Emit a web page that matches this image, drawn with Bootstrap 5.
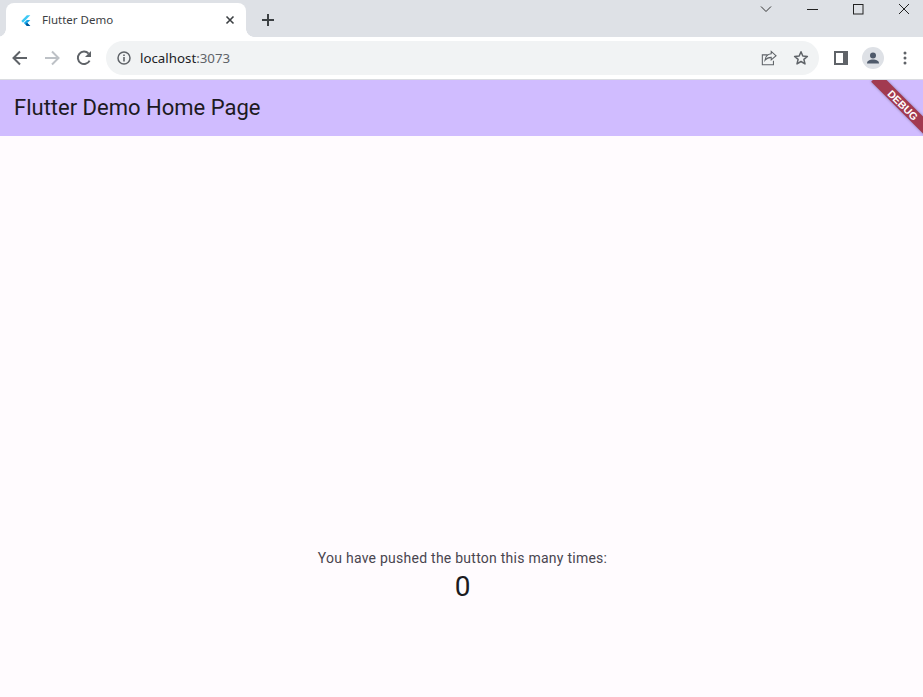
<!DOCTYPE html>
<html lang="en">
<head>
<meta charset="utf-8">
<title>Flutter Demo</title>
<link href="https://cdn.jsdelivr.net/npm/bootstrap@5.3.0/dist/css/bootstrap.min.css" rel="stylesheet">
<script src="https://cdn.jsdelivr.net/npm/bootstrap@5.3.0/dist/js/bootstrap.bundle.min.js"></script>
<style>
html,body{height:100%;overflow:hidden}
body{background:#fffbfe;font-family:Roboto,sans-serif;color:#1c1b1f}
.shell{height:697px}
.tabstrip{height:37px;background:#dee1e6;padding-left:6px;overflow:hidden}
.tabitem{width:240px;height:34px;margin-top:3px;background:#fff;border-radius:8px 8px 0 0;padding:0 11px 0 14px;font:11.5px "Noto Sans",sans-serif;color:#3c4043;position:relative}
.tabitem::before,.tabitem::after{content:"";position:absolute;bottom:0;width:8px;height:8px;background:radial-gradient(circle at 0 0,transparent 7.5px,#fff 8px)}
.tabitem::before{left:-8px}
.tabitem::after{right:-8px;background:radial-gradient(circle at 100% 0,transparent 7.5px,#fff 8px)}
.tabname{margin-left:10px;margin-top:-1px}
.plusbtn{margin-left:9px;margin-top:3px}
.winctl{margin-left:auto;margin-right:-4px;height:18px}
.winbtn{width:46px;height:18px}
.winbtn svg{display:block}
.toolbar{height:43px;background:#fff;border-bottom:1px solid #dadce0;padding:0 0 1px 4px}
.navbtn{width:32px;height:32px;flex:none}
.omnibox{width:713px;height:34px;margin-left:6px;background:#f1f3f4;border-radius:17px;padding:0 10px 0 10px;font:13.3px "Noto Sans",sans-serif;color:#202124}
.urlhost{margin-left:8px}
.urlport{color:#5f6368}
.omniend{margin-left:auto;gap:16px}
.toolright{margin-left:6px}
.appbar{height:56px;background:#d0bcff;padding-left:14px;font-size:22px;line-height:28px;color:#1d1a22}
.stage{padding-top:412px;padding-left:2px;flex:1}
.pushmsg{font-size:14px;line-height:20px;letter-spacing:.25px;color:#49454f}
.countnum{font-size:28px;line-height:36px;margin-top:1px;color:#1c1b1f}
.debugclip{position:absolute;top:80px;right:0;width:56px;height:56px;overflow:hidden}
.ribbon{position:absolute;top:18.500px;left:-3px;width:78px;height:12px;background:#a23a50;transform:rotate(45deg);color:#fff;font:700 10.500px/12px "Liberation Sans",sans-serif;text-align:center;box-shadow:0 0 3px rgba(0,0,0,.35)}
</style>
</head>
<body>
<div class="shell d-flex flex-column">
  <div class="tabstrip d-flex align-items-start">
    <div class="tabitem d-flex align-items-center">
      <svg width="12" height="13" viewBox="0 0 14 14"><path d="M8 1 1.500 7.500 3.500 9.500 12 1Z" fill="#3cc8f4"/><path d="M8 6.500 4.500 10 8 13.500H12L8.500 10 12 6.500Z" fill="#12a5e8"/><path d="M6.500 11.500 8 10 8.500 10 12 13.500H8Z" fill="#01579b"/></svg>
      <span class="tabname">Flutter Demo</span>
      <svg class="ms-auto" width="10" height="10" viewBox="0 0 10 10"><path d="M1.500 1.500 8.500 8.500M8.500 1.500 1.500 8.500" stroke="#3c4043" stroke-width="1.600"/></svg>
    </div>
    <svg class="plusbtn" width="26" height="34" viewBox="0 0 26 34"><path d="M13 11V23M7 17H19" stroke="#3c4043" stroke-width="2"/></svg>
    <div class="winctl d-flex">
      <div class="winbtn d-flex justify-content-center align-items-center"><svg width="12" height="8" viewBox="0 0 12 8"><path d="M1 1.500 6 6.500 11 1.500" fill="none" stroke="#333" stroke-width="1"/></svg></div>
      <div class="winbtn d-flex justify-content-center align-items-center"><svg width="11" height="3" viewBox="0 0 11 3"><path d="M0 1.500H11" stroke="#222" stroke-width="1"/></svg></div>
      <div class="winbtn d-flex justify-content-center align-items-center"><svg width="11" height="11" viewBox="0 0 11 11"><rect x=".5" y=".5" width="9.500" height="9.500" fill="none" stroke="#222"/></svg></div>
      <div class="winbtn d-flex justify-content-center align-items-center"><svg width="12" height="12" viewBox="0 0 12 12"><path d="M1 1 11 11M11 1 1 11" stroke="#222" stroke-width="1"/></svg></div>
    </div>
  </div>
  <div class="toolbar d-flex align-items-center">
    <div class="navbtn d-flex justify-content-center align-items-center"><svg width="16" height="16" viewBox="0 0 16 16"><path d="M15 8H2M8 1.500 1.500 8 8 14.500" fill="none" stroke="#5f6368" stroke-width="2"/></svg></div>
    <div class="navbtn d-flex justify-content-center align-items-center"><svg width="16" height="16" viewBox="0 0 16 16"><path d="M1 8H14M8 1.500 14.500 8 8 14.500" fill="none" stroke="#bdc1c6" stroke-width="2"/></svg></div>
    <div class="navbtn d-flex justify-content-center align-items-center"><svg width="16" height="16" viewBox="0 0 16 16"><path d="M13.600 10.600A6.200 6.200 0 1 1 12.600 3.600" fill="none" stroke="#5f6368" stroke-width="2"/><path d="M15 1V7H9Z" fill="#5f6368"/></svg></div>
    <div class="omnibox d-flex align-items-center">
      <svg width="16" height="16" viewBox="0 0 16 16"><circle cx="8" cy="8" r="6" fill="none" stroke="#5f6368" stroke-width="1.500"/><path d="M8 7V11.500M8 4.500V6" stroke="#5f6368" stroke-width="1.600"/></svg>
      <span class="urlhost">localhost<span class="urlport">:3073</span></span>
      <div class="omniend d-flex align-items-center">
        <svg width="16" height="16" viewBox="0 0 18 18"><path d="M17 6.500 11.500 1.500V4.200C7 4.700 5 7.500 4.500 11.500 6.500 9 8.500 8.300 11.500 8.300V11.200Z" fill="none" stroke="#5f6368" stroke-width="1.200"/><path d="M7.500 5.500H1.500V16.500H14V12" fill="none" stroke="#5f6368" stroke-width="1.200"/></svg>
        <svg width="16" height="16" viewBox="0 0 16 16"><path d="M8 1.800 9.800 6 14.400 6.400 10.900 9.400 12 13.900 8 11.500 4 13.900 5.100 9.400 1.600 6.400 6.200 6Z" fill="none" stroke="#5f6368" stroke-width="1.500" stroke-linejoin="round"/></svg>
      </div>
    </div>
    <div class="toolright d-flex align-items-center">
      <div class="navbtn d-flex justify-content-center align-items-center"><svg width="14" height="14" viewBox="0 0 14 14"><path fill-rule="evenodd" d="M0 0H14V14H0ZM2 2V12H9V2Z" fill="#5f6368"/></svg></div>
      <div class="navbtn d-flex justify-content-center align-items-center"><svg width="22" height="22" viewBox="0 0 22 22"><circle cx="11" cy="11" r="11" fill="#dee1e6"/><circle cx="11" cy="8.500" r="3" fill="#4f5a6b"/><path d="M5 16.500C5 13.500 8 12.500 11 12.500S17 13.500 17 16.500Z" fill="#4f5a6b"/></svg></div>
      <div class="navbtn d-flex justify-content-center align-items-center"><svg width="4" height="14" viewBox="0 0 4 14"><circle cx="2" cy="2" r="1.500" fill="#5f6368"/><circle cx="2" cy="7" r="1.500" fill="#5f6368"/><circle cx="2" cy="12" r="1.500" fill="#5f6368"/></svg></div>
    </div>
  </div>
  <header class="appbar d-flex align-items-center">Flutter Demo Home Page</header>
  <main class="stage text-center">
    <div class="pushmsg">You have pushed the button this many times:</div>
    <div class="countnum">0</div>
  </main>
</div>
<div class="debugclip"><div class="ribbon">DEBUG</div></div>
</body>
</html>
